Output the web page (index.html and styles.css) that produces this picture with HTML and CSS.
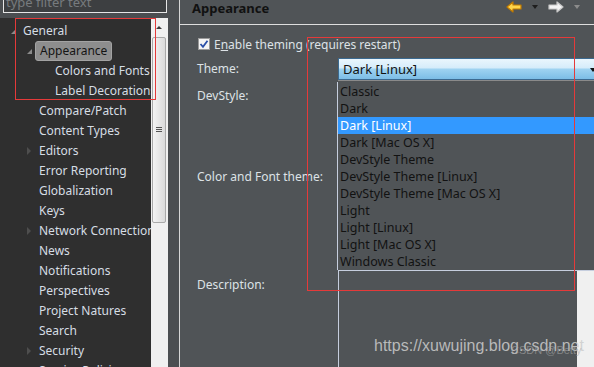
FILE: index.html
```html
<!DOCTYPE html>
<html>
<head>
    <title>Preferences - Appearance</title>
    <link rel="stylesheet" href="styles.css">
</head>
<body>
    <div class="app">
        <div class="sidebar">
            <div class="filter">type filter text</div>
            <div class="tree-wrap">
                <div class="tree">
                    <div class="row lvl0"><span class="twisty open"></span>General</div>
                    <div class="row lvl1"><span class="twisty open"></span><span class="selected">Appearance</span></div>
                    <div class="row lvl2">Colors and Fonts</div>
                    <div class="row lvl2">Label Decorations</div>
                    <div class="row lvl1">Compare/Patch</div>
                    <div class="row lvl1">Content Types</div>
                    <div class="row lvl1"><span class="twisty closed"></span>Editors</div>
                    <div class="row lvl1">Error Reporting</div>
                    <div class="row lvl1">Globalization</div>
                    <div class="row lvl1">Keys</div>
                    <div class="row lvl1"><span class="twisty closed"></span>Network Connections</div>
                    <div class="row lvl1">News</div>
                    <div class="row lvl1">Notifications</div>
                    <div class="row lvl1">Perspectives</div>
                    <div class="row lvl1">Project Natures</div>
                    <div class="row lvl1">Search</div>
                    <div class="row lvl1"><span class="twisty closed"></span>Security</div>
                    <div class="row lvl1">Service Policies</div>
                </div>
                <div class="vscroll">
                    <div class="arrow-up"></div>
                    <div class="thumb"><div class="grip"></div></div>
                </div>
            </div>
        </div>
        <div class="gap"></div>
        <div class="main">
            <div class="header">
                <h1>Appearance</h1>
                <div class="nav">
                    <svg width="16" height="12" viewBox="0 0 16 12">
                        <path d="M1 6 L7 1 L7 4 L15 4 L15 8 L7 8 L7 11 Z" fill="#ffd54a" stroke="#c07a00" stroke-width="1.2" stroke-linejoin="round"/>
                    </svg>
                    <span class="drop dark"></span>
                    <svg width="16" height="12" viewBox="0 0 16 12">
                        <path d="M15 6 L9 1 L9 4 L1 4 L1 8 L9 8 L9 11 Z" fill="#f4f4f4" stroke="#c8c8c8" stroke-width="1.2" stroke-linejoin="round"/>
                    </svg>
                    <span class="drop light"></span>
                    <span class="dot"></span>
                </div>
            </div>
            <div class="content">
                <div class="check-row">
                    <svg class="checkbox" width="12" height="12" viewBox="0 0 12 12">
                        <rect x="0.5" y="0.5" width="11" height="11" fill="#f4f4f4" stroke="#9a9a9a"/>
                        <path d="M2.5 6 L5 8.8 L9.5 2.8" fill="none" stroke="#2a4fa8" stroke-width="1.8"/>
                    </svg>
                    <span>E<u>n</u>able theming (requires restart)</span>
                </div>
                <div class="form">
                    <div class="label theme-label">Theme:</div>
                    <div class="combo">Dark [Linux]<span class="combo-arrow"></span></div>
                    <div class="label dev-label">DevStyle:</div>
                    <div class="filler dev-row"></div>
                    <div class="label color-label">Color and Font theme:</div>
                    <div class="filler color-row"></div>
                    <div class="label desc-label">Description:</div>
                    <div class="desc-box">
                        <div class="desc-text"></div>
                        <div class="desc-scroll"></div>
                    </div>
                    <div class="popup">
                        <div class="item">Classic</div>
                        <div class="item">Dark</div>
                        <div class="item active">Dark [Linux]</div>
                        <div class="item">Dark [Mac OS X]</div>
                        <div class="item">DevStyle Theme</div>
                        <div class="item">DevStyle Theme [Linux]</div>
                        <div class="item">DevStyle Theme [Mac OS X]</div>
                        <div class="item">Light</div>
                        <div class="item">Light [Linux]</div>
                        <div class="item">Light [Mac OS X]</div>
                        <div class="item">Windows Classic</div>
                    </div>
                </div>
            </div>
        </div>
    </div>

    <div class="mark mark-tree"></div>
    <div class="mark mark-popup"></div>
    <div class="watermark">https://xuwujing.blog.csdn.net</div>
    <div class="watermark-small">CSDN @Betty</div>
</body>
</html>
```

FILE: styles.css
```css
body {
    margin: 0;
    width: 594px;
    height: 367px;
    overflow: hidden;
    position: relative;
    background-color: #4b4e51;
    font-family: 'Noto Sans', 'Open Sans', sans-serif;
    font-size: 12px;
    color: #dde2e6;
}

.app {
    display: flex;
    height: 367px;
}

/* left side: filter + tree */
.sidebar {
    width: 168px;
    display: flex;
    flex-direction: column;
}

.filter {
    margin: -9px 1px 0 3px;
    height: 21px;
    border: 1px solid #e6e6e6;
    border-top: none;
    background-color: #3d3f41;
    color: #777b7e;
    padding-left: 2px;
    font-size: 13px;
    line-height: 22px;
}

.tree-wrap {
    margin-top: 5px;
    flex: 1;
    display: flex;
    overflow: hidden;
}

.tree {
    width: 151px;
    background-color: #2f2f2f;
    padding-top: 3px;
    overflow: hidden;
}

.row {
    height: 20px;
    line-height: 20px;
    white-space: nowrap;
    position: relative;
    color: #d6dde4;
}

.lvl0 { padding-left: 23px; }
.lvl1 { padding-left: 39px; }
.lvl2 { padding-left: 55px; }

.twisty {
    position: absolute;
    top: 7px;
    width: 0;
    height: 0;
}

.lvl0 .twisty { left: 11px; }
.lvl1 .twisty { left: 27px; }

.twisty.open {
    border-left: 5px solid transparent;
    border-bottom: 5px solid #8a8a8a;
    top: 8px;
}

.twisty.closed {
    border-top: 4px solid transparent;
    border-bottom: 4px solid transparent;
    border-left: 4px solid #4e4e4e;
    top: 6px;
}

.selected {
    display: inline-block;
    margin-left: -4px;
    padding: 0 4px;
    height: 18px;
    line-height: 18px;
    background-color: #8d8d8d;
    border: 1px solid #a3a3a3;
    border-radius: 3px;
    color: #141414;
}

.vscroll {
    width: 17px;
    background-color: #f0f0f0;
    position: relative;
}

.arrow-up {
    position: absolute;
    left: 5px;
    top: 8px;
    border-left: 3px solid transparent;
    border-right: 3px solid transparent;
    border-bottom: 3px solid #3a3a3a;
}

.thumb {
    position: absolute;
    left: 1px;
    top: 19px;
    width: 12px;
    height: 184px;
    border: 1px solid #a9a9a9;
    border-radius: 2px;
    background: linear-gradient(to right, #f4f4f4, #dadada);
}

.grip {
    position: absolute;
    left: 3px;
    top: 89px;
    width: 6px;
    height: 5px;
    background: repeating-linear-gradient(to bottom, #555 0, #555 1px, transparent 1px, transparent 2px);
}

.gap {
    width: 11px;
}

/* right side */
.main {
    flex: 1;
    background-color: #505457;
    border-left: 1px solid #d6d6d6;
    overflow: hidden;
}

.header {
    height: 24px;
    border-bottom: 1px solid #dedede;
    display: flex;
    align-items: flex-start;
    justify-content: space-between;
}

.header h1 {
    margin: 0;
    padding-left: 12px;
    font-size: 13px;
    font-weight: bold;
    color: #111;
    line-height: 17px;
}

.nav {
    display: flex;
    align-items: center;
    gap: 6px;
    padding-top: 1px;
    margin-right: -4px;
}

.drop {
    width: 0;
    height: 0;
    border-left: 3px solid transparent;
    border-right: 3px solid transparent;
    border-top: 4px solid #1e1e1e;
    margin: 0 4px;
}

.drop.light {
    border-top-color: #8c8c8c;
}

.dot {
    width: 4px;
    height: 4px;
    background-color: #6a3fc0;
    margin-left: 4px;
}

.content {
    padding: 12px 0 0 17px;
}

.check-row {
    display: flex;
    align-items: center;
    gap: 4px;
    height: 14px;
    color: #dde2e6;
}

.checkbox {
    margin-left: 1px;
}

.form {
    position: relative;
    margin-top: 7px;
    display: grid;
    grid-template-columns: 141px 256px;
    grid-template-rows: 24px 40px 148px 110px;
}

.label {
    color: #dde2e6;
    line-height: 16px;
}

.theme-label { padding-top: 3px; }
.dev-label { padding-top: 6px; }
.color-label { padding-top: 47px; }
.desc-label { padding-top: 7px; }

.combo {
    height: 22px;
    width: 262px;
    line-height: 21px;
    padding-left: 4px;
    box-sizing: border-box;
    border-top: 1px solid #3c6a90;
    border-bottom: 1px solid #3c6a90;
    border-left: 1px solid #3c6a90;
    background: linear-gradient(to bottom, #eaf6fd 0%, #d5ecfa 45%, #9fd3f1 50%, #7cbde6 100%);
    color: #121212;
    font-size: 13px;
    position: relative;
    box-shadow: 0 1px 0 #8a8a8a;
}

.combo-arrow {
    position: absolute;
    left: 251px;
    top: 9px;
    border-left: 3px solid transparent;
    border-right: 3px solid transparent;
    border-top: 4px solid #111;
}

.desc-box {
    display: flex;
    height: 110px;
}

.desc-text {
    width: 238px;
    border: 1px solid #c6cede;
    border-right: none;
}

.desc-scroll {
    flex: 1;
    background-color: #f0f0f0;
    border-top: 1px solid #c6cede;
}

.popup {
    position: absolute;
    left: 141px;
    top: 24px;
    width: 270px;
    height: 187px;
    padding-top: 1px;
    background-color: #505457;
    border-left: 1px solid #c6cede;
    margin-left: -1px;
    font-size: 12.5px;
}

.item {
    height: 17px;
    line-height: 17px;
    padding-left: 2px;
    color: #121212;
    white-space: nowrap;
}

.item.active {
    background-color: #3399ff;
    color: #ffffff;
}

/* annotation marks over the screenshot */
.mark {
    position: absolute;
    border: 1px solid #e53a3a;
}

.mark-tree {
    left: 15px;
    top: 18px;
    width: 139px;
    height: 80px;
}

.mark-popup {
    left: 307px;
    top: 37px;
    width: 266px;
    height: 252px;
}

.watermark {
    position: absolute;
    left: 374px;
    top: 337px;
    font-family: 'Liberation Sans', Arial, sans-serif;
    font-size: 16px;
    color: rgba(205, 205, 205, 0.85);
}

.watermark-small {
    position: absolute;
    left: 511px;
    top: 344px;
    font-family: 'Liberation Sans', Arial, sans-serif;
    font-size: 11px;
    color: rgba(170, 170, 170, 0.6);
}
```
